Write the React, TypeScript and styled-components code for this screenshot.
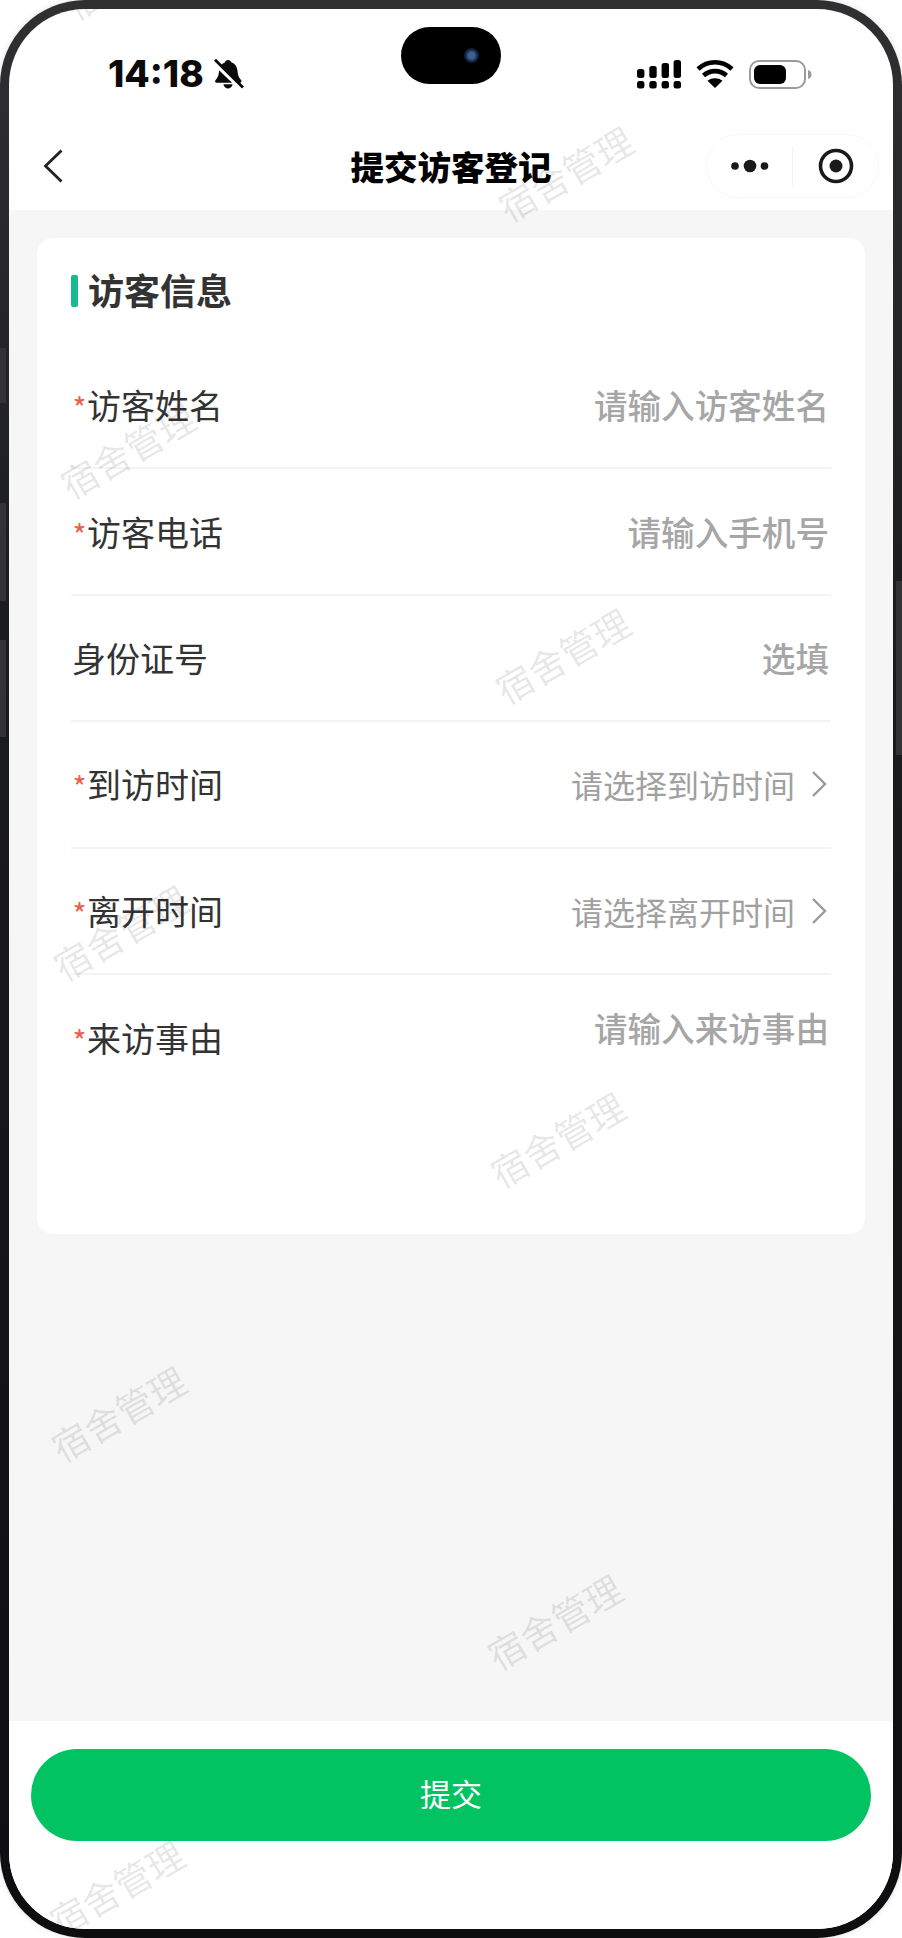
import React from "react";
import styled, { createGlobalStyle } from "styled-components";

const FONT = `"Noto Sans CJK SC", "Noto Sans", sans-serif`;

const GlobalStyle = createGlobalStyle`
  html, body {
    margin: 0;
    padding: 0;
    background: #fff;
    font-family: ${FONT};
  }
`;

const Frame = styled.div`
  position: relative;
  box-sizing: border-box;
  width: 902px;
  height: 1938px;
  padding: 9px;
  border-radius: 85px;
  background: linear-gradient(180deg, #303032 0%, #1c1d1f 30%, #141416 70%, #0e0e10 100%);
  box-shadow: 0 0 6px rgba(0, 0, 0, 0.12);
`;

const SideKey = styled.span<{ $side: "left" | "right"; $top: number; $height: number }>`
  position: absolute;
  ${(p) => p.$side}: 0;
  top: ${(p) => p.$top}px;
  width: 6px;
  height: ${(p) => p.$height}px;
  background: #333335;
`;

const Screen = styled.div`
  position: relative;
  display: flex;
  flex-direction: column;
  height: 100%;
  overflow: hidden;
  border-radius: 76px;
  background: #fff;
`;

const StatusBar = styled.div`
  position: relative;
  display: flex;
  flex: none;
  justify-content: space-between;
  box-sizing: border-box;
  height: 113px;
  padding: 50px 81px 0 99px;
`;

const Island = styled.div`
  position: absolute;
  top: 18px;
  left: 392px;
  width: 100px;
  height: 57px;
  border-radius: 29px;
  background: #000;
`;

const Camera = styled.span`
  position: absolute;
  top: 21px;
  left: 63px;
  width: 15px;
  height: 15px;
  border-radius: 50%;
  background: radial-gradient(circle, #3a5f90 0 32%, #14203a 58%, #080b14 100%);
`;

const StatusLeft = styled.div`
  display: flex;
  align-items: center;
  gap: 9px;
  height: 30px;
`;

const Clock = styled.span`
  font-family: Inter, "Liberation Sans", sans-serif;
  font-size: 37px;
  font-weight: 800;
  line-height: 30px;
  letter-spacing: 0;
  color: #0a0a0a;
`;

const StatusRight = styled.div`
  display: flex;
  align-items: center;
  gap: 15px;
  height: 30px;
`;

const NavBar = styled.div`
  display: grid;
  flex: none;
  grid-template-columns: 1fr auto 1fr;
  align-items: center;
  box-sizing: border-box;
  height: 88px;
  padding: 0 14px;
  background: #fff;
`;

const NavTitle = styled.h1`
  margin: 0;
  font-size: 33.5px;
  font-weight: 900;
  line-height: 44px;
  color: #000;
`;

const BackButton = styled.button`
  display: flex;
  width: 24px;
  margin-left: 20px;
  padding: 0;
  border: 0;
  background: none;
`;

const Capsule = styled.div`
  display: flex;
  justify-self: end;
  align-items: center;
  box-sizing: border-box;
  width: 173px;
  height: 64px;
  border: 1px solid rgba(0, 0, 0, 0.03);
  border-radius: 32px;
`;

const CapsuleCell = styled.span`
  display: flex;
  flex: 1;
  justify-content: center;
  align-items: center;
`;

const CapsuleDivider = styled.span`
  flex: none;
  width: 1px;
  height: 40px;
  background: rgba(0, 0, 0, 0.05);
`;

const Content = styled.main`
  flex: 1;
  padding: 28px;
  background: #f6f6f6;
`;

const Card = styled.section`
  box-sizing: border-box;
  height: 996px;
  padding: 0 34px;
  border-radius: 16px;
  background: #fff;
`;

const SectionHead = styled.div`
  display: flex;
  align-items: center;
  gap: 10px;
  box-sizing: border-box;
  height: 105px;
  padding: 37px 0 36px;
`;

const SectionBar = styled.span`
  flex: none;
  width: 7px;
  height: 32px;
  border-radius: 2px;
  background: #18ba8e;
`;

const SectionTitle = styled.h2`
  margin: 0 0 5px;
  font-size: 36px;
  font-weight: 700;
  line-height: 40px;
  color: #333;
`;

const Row = styled.div<{ $multiline?: boolean }>`
  display: flex;
  align-items: ${(p) => (p.$multiline ? "flex-start" : "center")};
  justify-content: space-between;
  box-sizing: border-box;
  height: 126.4px;
  padding: ${(p) => (p.$multiline ? "40px" : "0")} 2px 0 1px;
  border-bottom: ${(p) => (p.$multiline ? "0" : "2px solid #f3f3f5")};
`;

const Label = styled.span`
  display: flex;
  align-items: center;
  font-size: 34px;
  line-height: 46px;
  color: #333;
`;

const Star = styled.span`
  flex: none;
  width: 15px;
  margin-top: 4px;
  font-size: 30px;
  line-height: 26px;
  text-align: center;
  color: #e8604c;
`;

const Placeholder = styled.span<{ $picker?: boolean; $shift?: boolean }>`
  display: flex;
  align-items: center;
  gap: 16px;
  margin-top: ${(p) => (p.$shift ? "-10px" : "0")};
  font-size: ${(p) => (p.$picker ? "32px" : "33.6px")};
  font-weight: ${(p) => (p.$picker ? 400 : 500)};
  line-height: 46px;
  color: ${(p) => (p.$picker ? "#a0a0a0" : "#a6a6a6")};

  svg {
    margin-right: 2px;
  }
`;

const Footer = styled.footer`
  flex: none;
  box-sizing: border-box;
  height: 208px;
  padding: 28px 22px 0;
  background: #fff;
`;

const SubmitButton = styled.button`
  display: block;
  width: 100%;
  height: 92px;
  padding: 0 0 6px;
  border: 0;
  border-radius: 46px;
  font-family: ${FONT};
  font-size: 31px;
  color: #fff;
  background: #02c362;
`;

const Watermark = styled.span<{ $x: number; $y: number }>`
  position: absolute;
  left: ${(p) => p.$x}px;
  top: ${(p) => p.$y}px;
  font-size: 37px;
  line-height: 40px;
  white-space: nowrap;
  color: rgba(0, 0, 0, 0.1);
  pointer-events: none;
  transform: translate(-50%, -50%) rotate(-30deg);
`;

// centres measured on the full page, the layer sits in the screen so -9
const WATERMARKS = [
  [122, -38],
  [556, 164],
  [118, 441],
  [553, 646],
  [111, 923],
  [548, 1130],
  [109, 1404],
  [545, 1612],
  [107, 1878],
];

const ROWS = [
  { label: "访客姓名", required: true, hint: "请输入访客姓名" },
  { label: "访客电话", required: true, hint: "请输入手机号" },
  { label: "身份证号", required: false, hint: "选填" },
  { label: "到访时间", required: true, hint: "请选择到访时间", picker: true },
  { label: "离开时间", required: true, hint: "请选择离开时间", picker: true },
  { label: "来访事由", required: true, hint: "请输入来访事由", multiline: true },
];

const BellOff = () => (
  <svg width="31" height="30" viewBox="0 0 31 30">
    <path
      d="M15 1c-1.700 0-2.800 1-3 2.500C8.200 4.700 6.400 8.200 6 12.600c-.3 3.400-.9 5.800-3.400 8.300-1.100 1.200-.4 2.800 1.100 2.800h23.200c1.500 0 2.200-1.600 1.100-2.800-2.500-2.500-3.100-4.900-3.400-8.300-.4-4.400-2.200-7.900-6-9.100C17.800 2 16.700 1 15 1z"
      fill="#0a0a0a"
    />
    <path d="M10.400 25.200h9.200c-.4 2.500-2.300 4.200-4.600 4.200s-4.200-1.700-4.600-4.200z" fill="#0a0a0a" />
    <path d="M.5 3.500l26 25" stroke="#fff" strokeWidth="3.400" />
    <path d="M2 .8l28 27.700" stroke="#0a0a0a" strokeWidth="2.800" />
  </svg>
);

const SignalIcon = () => (
  <svg width="44" height="30" viewBox="0 0 44 30" fill="#000">
    <rect x="0" y="10" width="7.400" height="9" rx="2.500" />
    <rect x="12.300" y="7" width="7.400" height="12" rx="2.500" />
    <rect x="24.600" y="4" width="7.400" height="15" rx="2.500" />
    <rect x="36.600" y="1" width="7.400" height="18" rx="2.500" />
    <rect x="0" y="22" width="7.400" height="7.500" rx="2.500" />
    <rect x="12.300" y="22" width="7.400" height="7.500" rx="2.500" />
    <rect x="24.600" y="22" width="7.400" height="7.500" rx="2.500" />
    <rect x="36.600" y="22" width="7.400" height="7.500" rx="2.500" />
  </svg>
);

const WifiIcon = () => (
  <svg width="38" height="30" viewBox="0 0 38 30" fill="none">
    <path d="M19 29l-7.500-7.200c4.200-3.300 10.800-3.300 15 0z" fill="#000" />
    <path d="M7.500 16.500c6.600-5.900 16.400-5.900 23 0" stroke="#000" strokeWidth="4.600" />
    <path d="M2 10c9.800-9 24.200-9 34 0" stroke="#000" strokeWidth="4.600" />
  </svg>
);

const BatteryIcon = () => (
  <svg width="63" height="30" viewBox="0 0 63 30">
    <rect x="1" y="2" width="55" height="27" rx="9" fill="none" stroke="#9b9b9b" strokeWidth="2" />
    <rect x="5" y="6" width="32" height="19" rx="6" fill="#000" />
    <path d="M59 11c2.500.6 3.500 2.200 3.500 4.500S61.500 19.400 59 20z" fill="#9b9b9b" />
  </svg>
);

const BackIcon = () => (
  <svg width="20" height="34" viewBox="0 0 20 34" fill="none">
    <path d="M18.500 1.500L2.500 17l16 15.500" stroke="#222" strokeWidth="2.800" />
  </svg>
);

const DotsIcon = () => (
  <svg width="38" height="14" viewBox="0 0 38 14" fill="#1a1a1a">
    <circle cx="4" cy="7" r="3.800" />
    <circle cx="19" cy="7" r="6.300" />
    <circle cx="33.500" cy="7" r="3.800" />
  </svg>
);

const TargetIcon = () => (
  <svg width="36" height="36" viewBox="0 0 36 36" fill="none">
    <circle cx="18" cy="18" r="15.500" stroke="#1a1a1a" strokeWidth="3.600" />
    <circle cx="18" cy="18" r="6.500" fill="#1a1a1a" />
  </svg>
);

const ChevronIcon = () => (
  <svg width="16" height="28" viewBox="0 0 16 28" fill="none">
    <path d="M2 2l12 12L2 26" stroke="#9a9a9a" strokeWidth="2.400" />
  </svg>
);

export default function App() {
  return (
    <>
      <GlobalStyle />
      <Frame>
        <SideKey $side="left" $top={348} $height={55} />
        <SideKey $side="left" $top={503} $height={98} />
        <SideKey $side="left" $top={640} $height={97} />
        <SideKey $side="right" $top={581} $height={174} />
        <Screen>
          <StatusBar>
            <StatusLeft>
              <Clock>14:18</Clock>
              <BellOff />
            </StatusLeft>
            <Island>
              <Camera />
            </Island>
            <StatusRight>
              <SignalIcon />
              <WifiIcon />
              <BatteryIcon />
            </StatusRight>
          </StatusBar>
          <NavBar>
            <BackButton>
              <BackIcon />
            </BackButton>
            <NavTitle>提交访客登记</NavTitle>
            <Capsule>
              <CapsuleCell>
                <DotsIcon />
              </CapsuleCell>
              <CapsuleDivider />
              <CapsuleCell>
                <TargetIcon />
              </CapsuleCell>
            </Capsule>
          </NavBar>
          <Content>
            <Card>
              <SectionHead>
                <SectionBar />
                <SectionTitle>访客信息</SectionTitle>
              </SectionHead>
              {ROWS.map((row) => (
                <Row key={row.label} $multiline={row.multiline}>
                  <Label>
                    {row.required && <Star>*</Star>}
                    {row.label}
                  </Label>
                  <Placeholder $picker={row.picker} $shift={row.multiline}>
                    {row.hint}
                    {row.picker && <ChevronIcon />}
                  </Placeholder>
                </Row>
              ))}
            </Card>
          </Content>
          <Footer>
            <SubmitButton>提交</SubmitButton>
          </Footer>
          {WATERMARKS.map(([x, y]) => (
            <Watermark key={`${x}-${y}`} $x={x} $y={y}>
              宿舍管理
            </Watermark>
          ))}
        </Screen>
      </Frame>
    </>
  );
}
